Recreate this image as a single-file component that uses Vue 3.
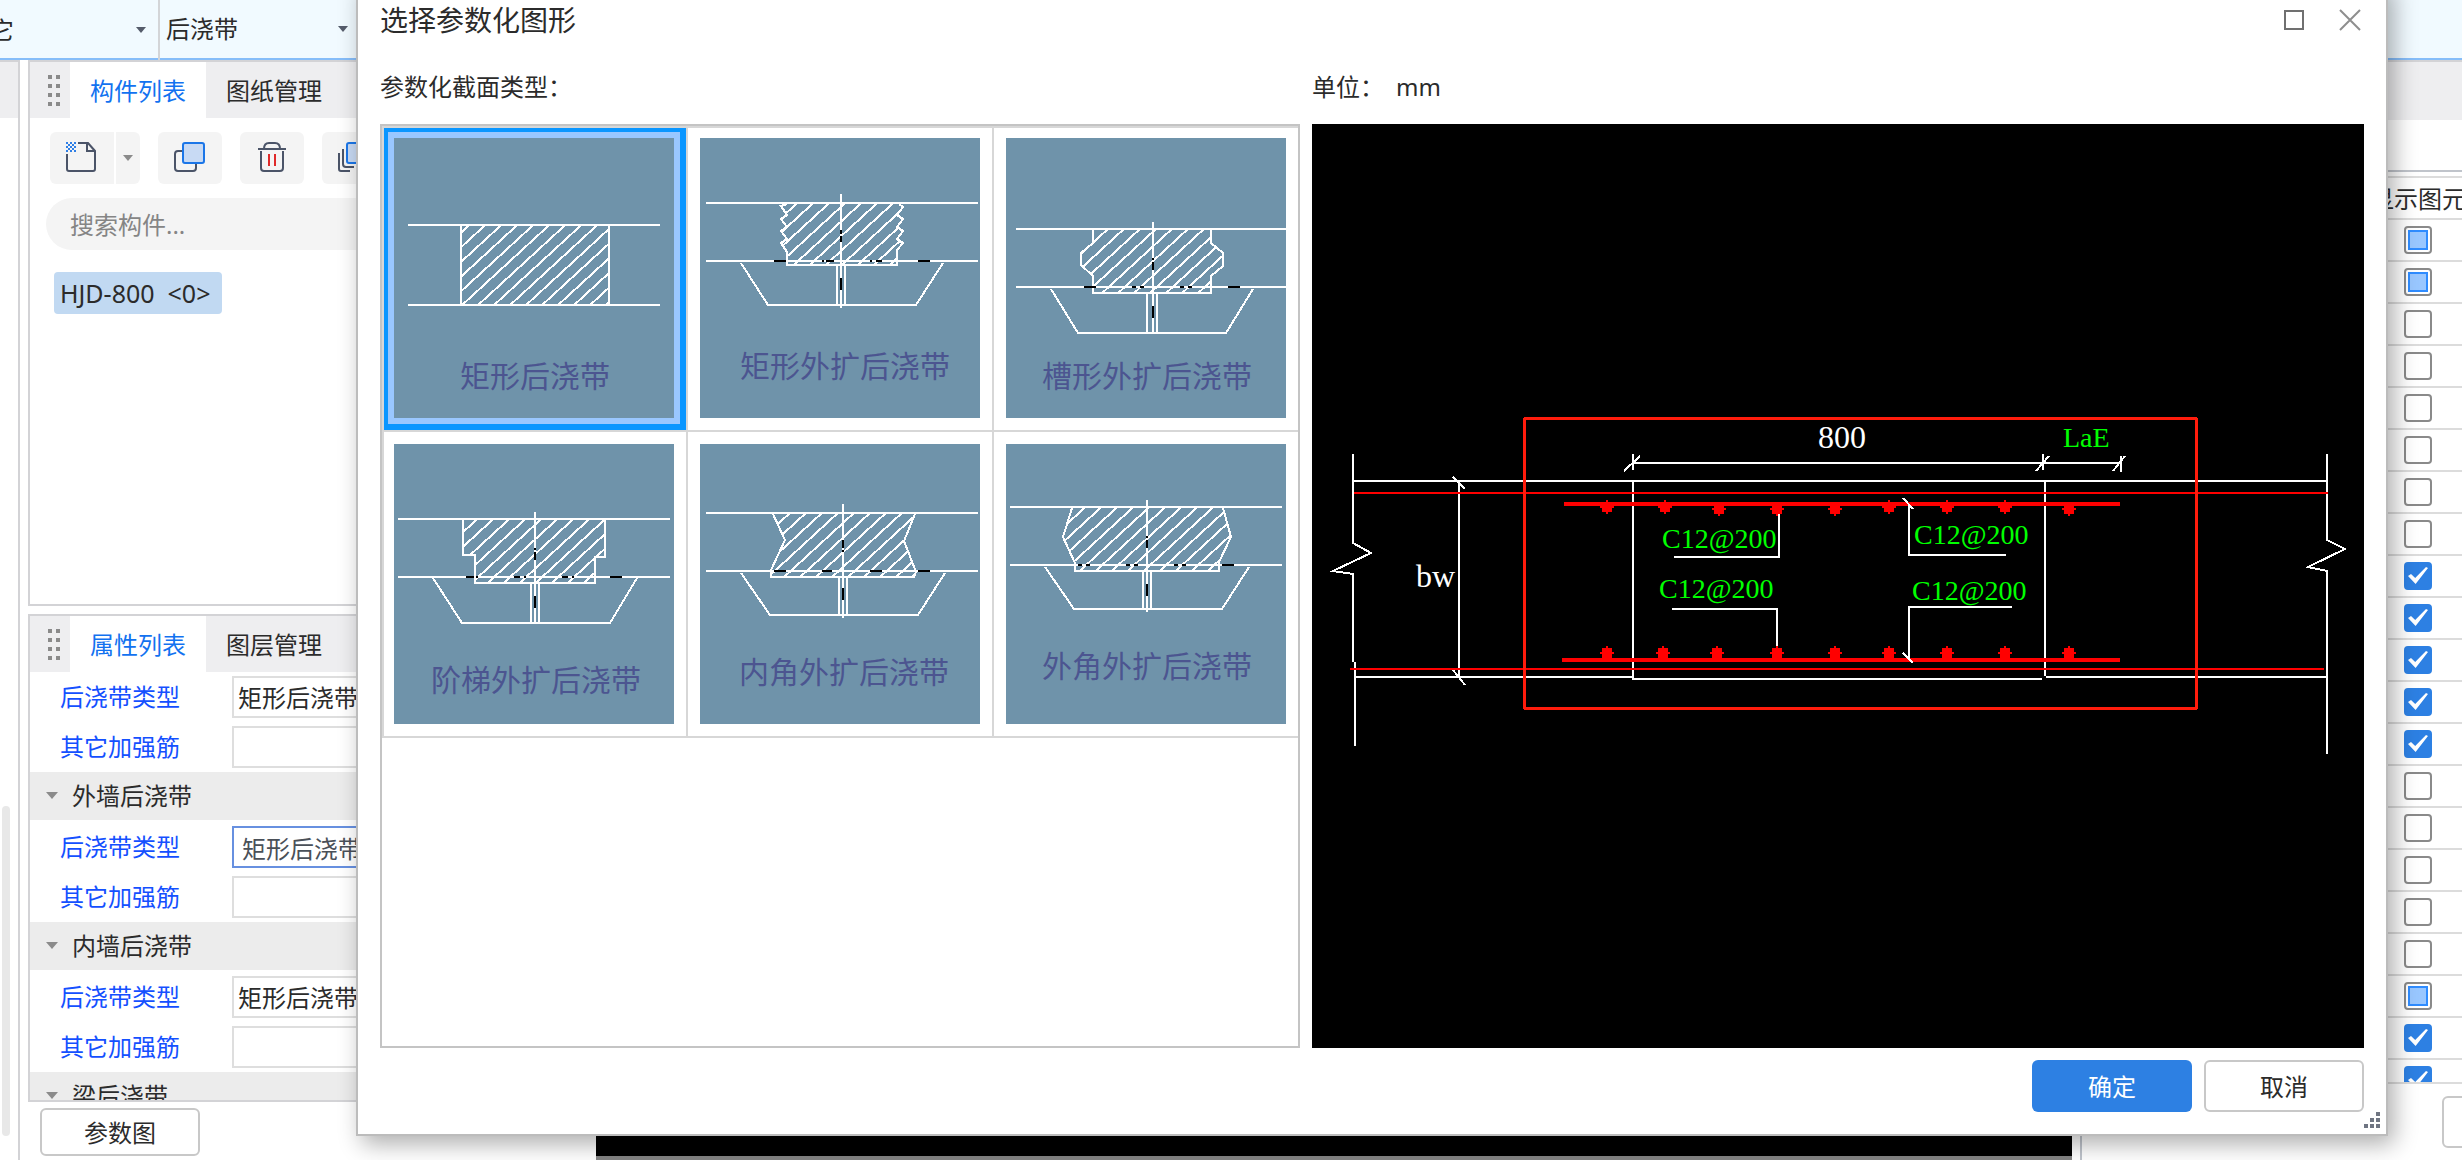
<script setup>
import { ref } from 'vue'

const STATE = { 0: 'off', 1: 'on', 2: 'partial' }
const rows = [2, 2, 0, 0, 0, 0, 0, 0, 1, 1, 1, 1, 1, 0, 0, 0, 0, 0, 2, 1, 1].map((s, i) => ({ id: i, state: STATE[s] }))

const groups = [
  { title: '', focused: false },
  { title: '外墙后浇带', focused: true },
  { title: '内墙后浇带', focused: false },
]

const checker = []
for (let r = 0; r < 5; r++) for (let c = 0; c < 5; c++) if ((r + c) % 2 === 0) checker.push({ x: c * 2, y: r * 2 })

const selected = ref(0)
const shapes = [
  {
    name: '矩形后浇带', tx: 66, ty: 249, top: 87, base: 167, x1: 14, x2: 266, phase: 186,
    outline: '67,87 67,167 215,167 215,87',
  },
  {
    name: '矩形外扩后浇带', tx: 40, ty: 239, top: 65, base: 123, x1: 6, x2: 278, phase: 168,
    outline: '87,66 81,68 87,77 81,81 87,89 81,93 87,101 81,105 87,114 87,127 197,127 197,112 203,105 197,101 203,93 197,89 203,81 197,77 203,69 199,66',
    cx: 141, cy1: 56, cy2: 170, tray: '41,125 68,167 216,167 243,125', stems: [137, 145], s1: 127, s2: 167,
    dashX: [[74, 86], [122, 124], [126, 134], [170, 172], [176, 182], [218, 230]], dashY: [[92, 96], [98, 104], [140, 152]],
  },
  {
    name: '槽形外扩后浇带', tx: 36, ty: 249, top: 91, base: 149, x1: 10, x2: 280, phase: 201,
    outline: '87,92 87,105 75,115 75,127 87,138 87,155 205,155 205,138 217,128 217,115 205,105 205,92',
    cx: 147, cy1: 84, cy2: 195, tray: '45,151 72,195 220,195 247,151', stems: [141, 151], s1: 155, s2: 195,
    dashX: [[78, 90], [126, 130], [134, 138], [174, 178], [182, 186], [222, 234]], dashY: [[120, 122], [124, 132], [168, 180]],
  },
  {
    name: '阶梯外扩后浇带', tx: 37, ty: 247, top: 75, base: 133, x1: 4, x2: 276, phase: 165,
    outline: '69,75 69,111 81,111 81,139 201,139 201,113 211,113 211,75',
    cx: 141, cy1: 68, cy2: 179, tray: '39,134 68,179 216,179 243,134', stems: [137, 145], s1: 139, s2: 179,
    dashX: [[72, 80], [82, 84], [120, 126], [130, 132], [168, 174], [178, 180], [216, 228]], dashY: [[104, 106], [108, 116], [152, 164]],
  },
  {
    name: '内角外扩后浇带', tx: 39, ty: 239, top: 69, base: 127, x1: 6, x2: 278, phase: 165,
    outline: '73,70 85,96 71,126 71,133 214,133 216,128 204,97 215,70',
    cx: 143, cy1: 60, cy2: 174, tray: '41,129 70,171 218,171 245,129', stems: [139, 147], s1: 133, s2: 171,
    dashX: [[74, 86], [122, 132], [170, 182], [218, 230]], dashY: [[96, 104], [106, 108], [144, 156]],
  },
  {
    name: '外角外扩后浇带', tx: 36, ty: 233, top: 63, base: 121, x1: 4, x2: 276, phase: 148,
    outline: '66,64 57,93 69,119 69,127 213,127 213,118 225,93 217,64',
    cx: 141, cy1: 56, cy2: 168, tray: '39,123 68,165 216,165 243,123', stems: [137, 145], s1: 127, s2: 165,
    dashX: [[72, 76], [80, 84], [120, 124], [128, 132], [168, 172], [176, 180], [216, 228]], dashY: [[92, 94], [96, 104], [140, 152]],
  },
]

// Diagonal hatch: parallel lines 16 units apart, cut off by each outline.
function hatch(phase) {
  let d = ''
  for (let c = phase % 16; c < 460; c += 16) d += `M${c} 0L${c - 220} 202`
  return d
}

const topBars = [[295, 383], [353, 383], [407, 385], [465, 385], [523, 385], [577, 383], [635, 383], [693, 383], [757, 385]]
const bottomBars = [295, 351, 405, 465, 523, 577, 635, 693, 757].map((x) => [x, 529])
const bars = [...topBars, ...bottomBars]
</script>

<template>
  <div class="app">
    <header class="topbar">
      <div class="pick pick-first">
        <select aria-label="构件大类"><option>其它</option></select>
        <svg class="caret" width="10" height="6" viewBox="0 0 10 6"><path d="M0 0H10L5 6Z" /></svg>
      </div>
      <div class="pick">
        <select aria-label="构件类型"><option>后浇带</option></select>
        <svg class="caret" width="10" height="6" viewBox="0 0 10 6"><path d="M0 0H10L5 6Z" /></svg>
      </div>
    </header>

    <div class="workspace">
      <div class="strip"><div class="strip-head"></div><div class="strip-thumb"></div></div>

      <div class="side">
        <section class="panel components">
          <div class="tabs">
            <span class="grip"><i v-for="n in 8" :key="n"></i></span>
            <button class="tab active">构件列表</button>
            <button class="tab">图纸管理</button>
          </div>
          <div class="tools">
            <div class="split">
              <button class="tool" aria-label="新建">
                <svg width="32" height="32" viewBox="0 0 32 32" fill="none" stroke="#4b5468" stroke-width="2">
                  <path d="M1 12V27a2 2 0 0 0 2 2H27a2 2 0 0 0 2-2V9L22 1H12M21 1V9H29" />
                  <rect v-for="(p, i) in checker" :key="i" :x="p.x" :y="p.y" width="2" height="2" fill="#2f7fe6" stroke="none" />
                </svg>
              </button>
              <button class="tool tool-drop" aria-label="新建选项">
                <svg width="10" height="6" viewBox="0 0 10 6"><path d="M0 0H10L5 6Z" fill="#8b8b8b" /></svg>
              </button>
            </div>
            <button class="tool" aria-label="复制">
              <svg width="32" height="32" viewBox="0 0 32 32" fill="none" stroke-width="2">
                <path d="M8 9H4a3 3 0 0 0-3 3V26a3 3 0 0 0 3 3H19a3 3 0 0 0 3-3V22" stroke="#4b5468" />
                <rect x="9" y="1" width="21" height="20" rx="2" fill="#c8daf4" stroke="#1b76e8" />
              </svg>
            </button>
            <button class="tool" aria-label="删除">
              <svg width="32" height="32" viewBox="0 0 32 32" fill="none" stroke="#4b5468" stroke-width="2">
                <path d="M2 7H30M8 7C8 3 10 1 13 1H19C22 1 24 3 24 7M5 9V26a3 3 0 0 0 3 3H24a3 3 0 0 0 3-3V9" />
                <path d="M13 12V24M19 12V24" stroke="#e02a2a" />
              </svg>
            </button>
            <button class="tool" aria-label="层间复制">
              <svg width="32" height="32" viewBox="0 0 32 32" fill="none" stroke-width="2">
                <path d="M1 11V27a2 2 0 0 0 2 2H12M5 7V22a3 3 0 0 0 3 3H16" stroke="#4b5468" />
                <rect x="9" y="1" width="21" height="20" rx="2" fill="#c8daf4" stroke="#1b76e8" />
              </svg>
            </button>
          </div>
          <input class="search" type="text" placeholder="搜索构件..." aria-label="搜索构件" />
          <span class="chip">HJD-800&nbsp; &lt;0&gt;</span>
        </section>

        <section class="panel props">
          <div class="tabs">
            <span class="grip"><i v-for="n in 8" :key="n"></i></span>
            <button class="tab active">属性列表</button>
            <button class="tab">图层管理</button>
          </div>
          <div class="prop-body">
            <template v-for="(g, i) in groups" :key="i">
              <div v-if="g.title" class="group">
                <svg width="12" height="8" viewBox="0 0 12 8"><path d="M0 0H12L6 7Z" fill="#8b8b8b" /></svg>{{ g.title }}
              </div>
              <div class="prop">
                <label :for="'type' + i">后浇带类型</label>
                <input :id="'type' + i" type="text" value="矩形后浇带" :class="{ focused: g.focused }" />
              </div>
              <div class="prop">
                <label :for="'bar' + i">其它加强筋</label>
                <input :id="'bar' + i" type="text" />
              </div>
            </template>
            <div class="group">
              <svg width="12" height="8" viewBox="0 0 12 8"><path d="M0 0H12L6 7Z" fill="#8b8b8b" /></svg>梁后浇带
            </div>
          </div>
        </section>
        <div class="side-foot"><button class="outline-btn">参数图</button></div>
      </div>

      <div class="canvas"></div>

      <aside class="layers">
        <div class="layers-head"></div>
        <div class="layers-tools"></div>
        <div class="layers-list">
          <table>
            <thead><tr><th class="name-col"></th><th class="show-col">显示图元</th></tr></thead>
            <tbody>
              <tr v-for="r in rows" :key="r.id">
                <td></td>
                <td class="show-col">
                  <input type="checkbox" aria-label="显示图元" :checked="r.state === 'on'" :indeterminate="r.state === 'partial'" />
                </td>
              </tr>
            </tbody>
          </table>
        </div>
        <div class="layers-foot"><button class="outline-btn layers-btn" aria-label="更多"></button></div>
      </aside>
    </div>

    <div class="dialog" role="dialog" aria-labelledby="dlg-title">
      <div class="dialog-head">
        <h1 id="dlg-title">选择参数化图形</h1>
        <div class="win-btns">
          <button aria-label="最大化"><svg width="20" height="20" viewBox="0 0 20 20"><rect x="1" y="1" width="18" height="18" fill="none" stroke="#707070" stroke-width="2" /></svg></button>
          <button aria-label="关闭"><svg width="22" height="22" viewBox="0 0 22 22"><path d="M1 1L21 21M21 1L1 21" stroke="#8e8e8e" stroke-width="2" /></svg></button>
        </div>
      </div>

      <div class="dialog-body">
        <div class="col-list">
          <p class="caption">参数化截面类型：</p>
          <div class="list">
            <div class="cells">
              <button v-for="(s, i) in shapes" :key="s.name" class="cell" :class="{ selected: i === selected }" @click="selected = i">
                <svg viewBox="0 0 280 280" width="280" height="280" fill="none" stroke="#fff" stroke-width="2" shape-rendering="crispEdges">
                  <rect width="280" height="280" fill="#6f93aa" stroke="none" />
                  <clipPath :id="'clip' + i"><polygon :points="s.outline" /></clipPath>
                  <path :d="hatch(s.phase)" :clip-path="`url(#clip${i})`" />
                  <polyline :points="s.outline" />
                  <path :d="`M${s.x1} ${s.top}H${s.x2}M${s.x1} ${s.base}H${s.x2}`" />
                  <template v-if="s.tray">
                    <polyline :points="s.tray" />
                    <path :d="`M${s.cx} ${s.cy1}V${s.cy2}`" />
                    <path v-for="x in s.stems" :key="x" :d="`M${x} ${s.s1}V${s.s2}`" />
                    <path v-for="d in s.dashX" :key="'x' + d[0]" :d="`M${d[0]} ${s.base}H${d[1]}`" stroke="#000" />
                    <path v-for="d in s.dashY" :key="'y' + d[0]" :d="`M${s.cx} ${d[0]}V${d[1]}`" stroke="#000" />
                  </template>
                  <text :x="s.tx" :y="s.ty">{{ s.name }}</text>
                </svg>
              </button>
            </div>
          </div>
        </div>

        <div class="col-view">
          <p class="caption">单位：<span>mm</span></p>
          <div class="view">
            <svg viewBox="0 0 1052 924" fill="none" stroke="#fff" stroke-width="2" shape-rendering="crispEdges">
              <path d="M41 330V419L59 429L21 447L41 450V538M43 538V622" />
              <path d="M1015 330V416L1033 425L996 443L1015 447V630" />
              <path d="M42 357H1015M43 553H321M320 555H730M734 553H1015M321 357V556M733 357V552" />
              <path d="M147 357V553M141 353L153 365M141 546L153 561" />
              <path d="M321 339H809M321 330V346M312 347L328 332M731 330V346M724 347L737 332M809 332V348M801 347L813 332" />
              <path d="M42 369H1016M38 545H1012" stroke="#f00" />
              <path d="M252 380H808M250 536H808" stroke="#f00" stroke-width="4" />
              <path d="M467 388V433H362M360 485H465V525" />
              <g v-for="(b, i) in bars" :key="i" :transform="`translate(${b[0]} ${b[1]})`" fill="#f00" stroke="none">
                <path d="M-1 -7H1V-5H5V-1H7V1H5V3H3V5H1V7H-1V5H-3V3H-5V1H-7V-1H-5V-5H-1Z" />
                <rect x="-5" y="-5" width="10" height="10" />
              </g>
              <path d="M597 380V431H694M591 374L601 385M700 483H597V536M591 529L601 539" />
              <rect x="212.5" y="294.5" width="672" height="290" rx="1" stroke="#ff1c0c" stroke-width="3" />
              <g class="green">
                <text x="350" y="424">C12@200</text>
                <text x="347" y="474">C12@200</text>
                <text x="602" y="420">C12@200</text>
                <text x="600" y="476">C12@200</text>
                <text x="751" y="323">LaE</text>
              </g>
              <g class="white">
                <text x="506" y="324">800</text>
                <text x="104" y="463">bw</text>
              </g>
            </svg>
          </div>
        </div>
      </div>

      <div class="dialog-foot">
        <button class="primary-btn">确定</button>
        <button class="outline-btn cancel">取消</button>
      </div>
      <svg class="resize" width="16" height="16" viewBox="0 0 16 16" fill="#6f7582">
        <path d="M12 0h4v4h-4zM6 6h4v4h-4zM12 6h4v4h-4zM0 12h4v4h-4zM6 12h4v4h-4zM12 12h4v4h-4z" />
      </svg>
    </div>
  </div>
</template>

<style>
body { margin: 0; background: #fff; }
</style>

<style scoped>
* { box-sizing: border-box; }
.app {
  position: relative;
  display: flex;
  flex-direction: column;
  height: 100vh;
  overflow: hidden;
  background: #fff;
  color: #2b2b2b;
  font: 24px/32px "Noto Sans", "Noto Sans CJK SC", sans-serif;
}
button, input, select { font: inherit; color: inherit; margin: 0; outline: none; }
button { border: 0; padding: 0; background: none; cursor: pointer; }

.topbar {
  display: flex;
  flex: none;
  height: 60px;
  background: #f1faff;
  border-bottom: 2px solid #86bdf9;
}
.pick { display: flex; align-items: center; width: 200px; padding: 0 12px 0 6px; }
.pick-first { margin-left: -40px; border-right: 2px solid #d3d5d8; height: 60px; }
.pick select { flex: 1; min-width: 0; appearance: none; border: 0; background: none; padding: 0; }
.caret { fill: #555c6b; flex: none; }

.workspace { display: flex; flex: 1; min-height: 0; }
.strip { display: flex; flex-direction: column; flex: none; width: 20px; border-right: 2px solid #d3d3d6; border-top: 2px solid #d3d3d6; }
.strip-head { height: 56px; background: #eeeef0; }
.strip-thumb { width: 8px; height: 330px; margin: auto 0 24px 2px; border-radius: 4px; background: #e8e8e8; }

.side { display: flex; flex-direction: column; flex: none; width: 560px; margin: 0 8px; }
.panel { border: 2px solid #d3d3d6; overflow: hidden; }
.components { flex: none; height: 546px; margin-bottom: 8px; }
.tabs { display: flex; height: 56px; background: #eeeef0; }
.grip { display: grid; grid-template-columns: 4px 4px; gap: 5px 4px; align-content: center; justify-content: center; width: 40px; padding-left: 8px; }
.grip i { width: 4px; height: 4px; background: #8a8a8a; }
.tab { width: 136px; padding-top: 2px; }
.tab.active { background: #fff; color: #1272f0; }

.tools { display: flex; gap: 18px; padding: 14px 20px; }
.split { display: flex; gap: 2px; }
.tool { display: flex; align-items: center; justify-content: center; flex: none; width: 64px; height: 52px; border-radius: 6px; background: #f4f4f4; }
.split .tool:first-child { border-radius: 6px 0 0 6px; }
.tool.tool-drop { width: 24px; border-radius: 0 6px 6px 0; }
.search { display: block; width: 500px; height: 52px; margin-left: 16px; padding: 0 24px; border: 0; border-radius: 26px; background: #f4f4f4; }
.search::placeholder { color: #858585; opacity: 1; }
.chip { display: inline-block; margin: 22px 24px; padding: 5px 12px 5px 6px; border-radius: 4px; background: #c1d9f2; font-size: 25px; }

.props { display: flex; flex-direction: column; flex: 1; min-height: 0; }
.props .tabs { flex: none; }
.prop-body { flex: 1; min-height: 0; overflow: hidden; }
.prop { display: flex; align-items: center; height: 50px; padding: 0 16px 0 30px; }
.prop label { flex: none; width: 172px; color: #1450ff; }
.prop input { flex: 1; min-width: 0; height: 42px; border: 2px solid #dedede; padding: 0 4px 2px; background: #fff; }
.prop input.focused { border-color: #6790e0; padding: 0 8px; color: #4a5058; }
.group { display: flex; align-items: center; gap: 14px; height: 48px; margin-bottom: 2px; padding-left: 16px; background: #ececec; }
.side-foot { flex: none; padding: 6px 12px 4px; }
.side-foot .outline-btn { height: 48px; }
.outline-btn { display: block; width: 160px; height: 52px; padding-top: 2px; border: 2px solid #c8c8c8; border-radius: 6px; background: #fff; }

.canvas { flex: 1; background: #000; border-bottom: 4px solid #838383; }

.layers { display: flex; flex-direction: column; flex: none; width: 382px; margin-left: 8px; border-left: 2px solid #bfc4cc; border-top: 2px solid #d3d3d6; }
.layers-head { flex: none; height: 58px; background: #eeeef0; }
.layers-tools { flex: none; height: 52px; border-bottom: 2px solid #c0c4cb; }
.layers-list { flex: 1; min-height: 0; margin-top: 4px; overflow: hidden; border-top: 2px solid #dcdcdc; border-bottom: 2px solid #dcdcdc; }
.layers-list table { border-collapse: separate; border-spacing: 0; table-layout: fixed; width: 392px; }
.layers-list th, .layers-list td { height: 42px; padding: 0; border-bottom: 2px solid #dcdcdc; font-weight: 400; line-height: 0; }
.layers-list th { padding-top: 2px; line-height: 32px; white-space: nowrap; }
.name-col { width: 280px; }
.show-col { width: 112px; text-align: center; }
.layers-list input { appearance: none; display: inline-grid; place-content: center; width: 28px; height: 28px; border: 2px solid #8a8a8a; border-radius: 4px; background: #fff; vertical-align: middle; }
.layers-list input:indeterminate::before { content: ""; width: 20px; height: 20px; box-sizing: border-box; border: 2px solid #2f8cff; background: #99c7ff; }
.layers-list input:checked { border-color: #2d80e3; background: #2d80e3; }
.layers-list input:checked::before { content: ""; width: 20px; height: 20px; background: #fff; clip-path: polygon(0 50%, 15% 40%, 36% 60%, 90% 5%, 100% 10%, 38% 90%); }
.layers-foot { flex: none; height: 76px; padding: 12px 0 0 360px; overflow: hidden; }

.dialog {
  position: absolute;
  top: -20px;
  right: 74px;
  bottom: 24px;
  left: 356px;
  display: flex;
  flex-direction: column;
  padding: 0 22px 22px;
  border: 2px solid #bcbcbc;
  background: #fff;
  box-shadow: 6px 8px 22px rgba(0, 0, 0, 0.32);
}
.dialog-head { display: flex; align-items: center; justify-content: space-between; flex: none; height: 76px; }
.dialog-head h1 { margin: 0; font-size: 28px; font-weight: 400; }
.win-btns { display: flex; align-items: center; gap: 35px; padding-right: 3px; }
.win-btns button { display: flex; }
.dialog-body { display: flex; gap: 12px; flex: 1; min-height: 0; }
.col-list, .col-view { display: flex; flex-direction: column; min-width: 0; }
.col-list { flex: none; width: 920px; }
.col-view { flex: 1; }
.caption { flex: none; margin: 0; padding: 13px 0 21px; }
.caption span { margin-left: 12px; }
.list { flex: 1; min-height: 0; overflow: hidden; border: 2px solid #c4c4c4; }
.cells { position: relative; display: grid; grid-template-columns: repeat(3, 306px); width: 918px; box-shadow: inset 2px 2px #d7d7d7; }
.cell { position: relative; display: flex; height: 306px; padding: 12px; border: solid #d7d7d7; border-width: 0 2px 2px 0; }
.cell svg { position: relative; flex: none; }
.cell.selected::before { content: ""; position: absolute; top: 2px; right: 0; bottom: 0; left: 2px; border: solid #0a96ff; border-width: 4px 6px 6px 4px; background: #99c7ff; }
.cell text { font-size: 30px; fill: #4c5590; stroke: none; }
.view { flex: 1; min-height: 0; background: #000; }
.view svg { display: block; width: 100%; height: 100%; }
.view text { font-family: "Liberation Serif", serif; font-size: 28px; stroke: none; }
.green { fill: #0f0; }
.view .white text { font-size: 32px; fill: #fff; }
.dialog-foot { display: flex; justify-content: flex-end; gap: 12px; flex: none; margin-top: 12px; }
.primary-btn { width: 160px; height: 52px; padding-top: 2px; border-radius: 6px; background: #2d80e3; color: #fff; }
.resize { position: absolute; right: 6px; bottom: 6px; }
</style>
